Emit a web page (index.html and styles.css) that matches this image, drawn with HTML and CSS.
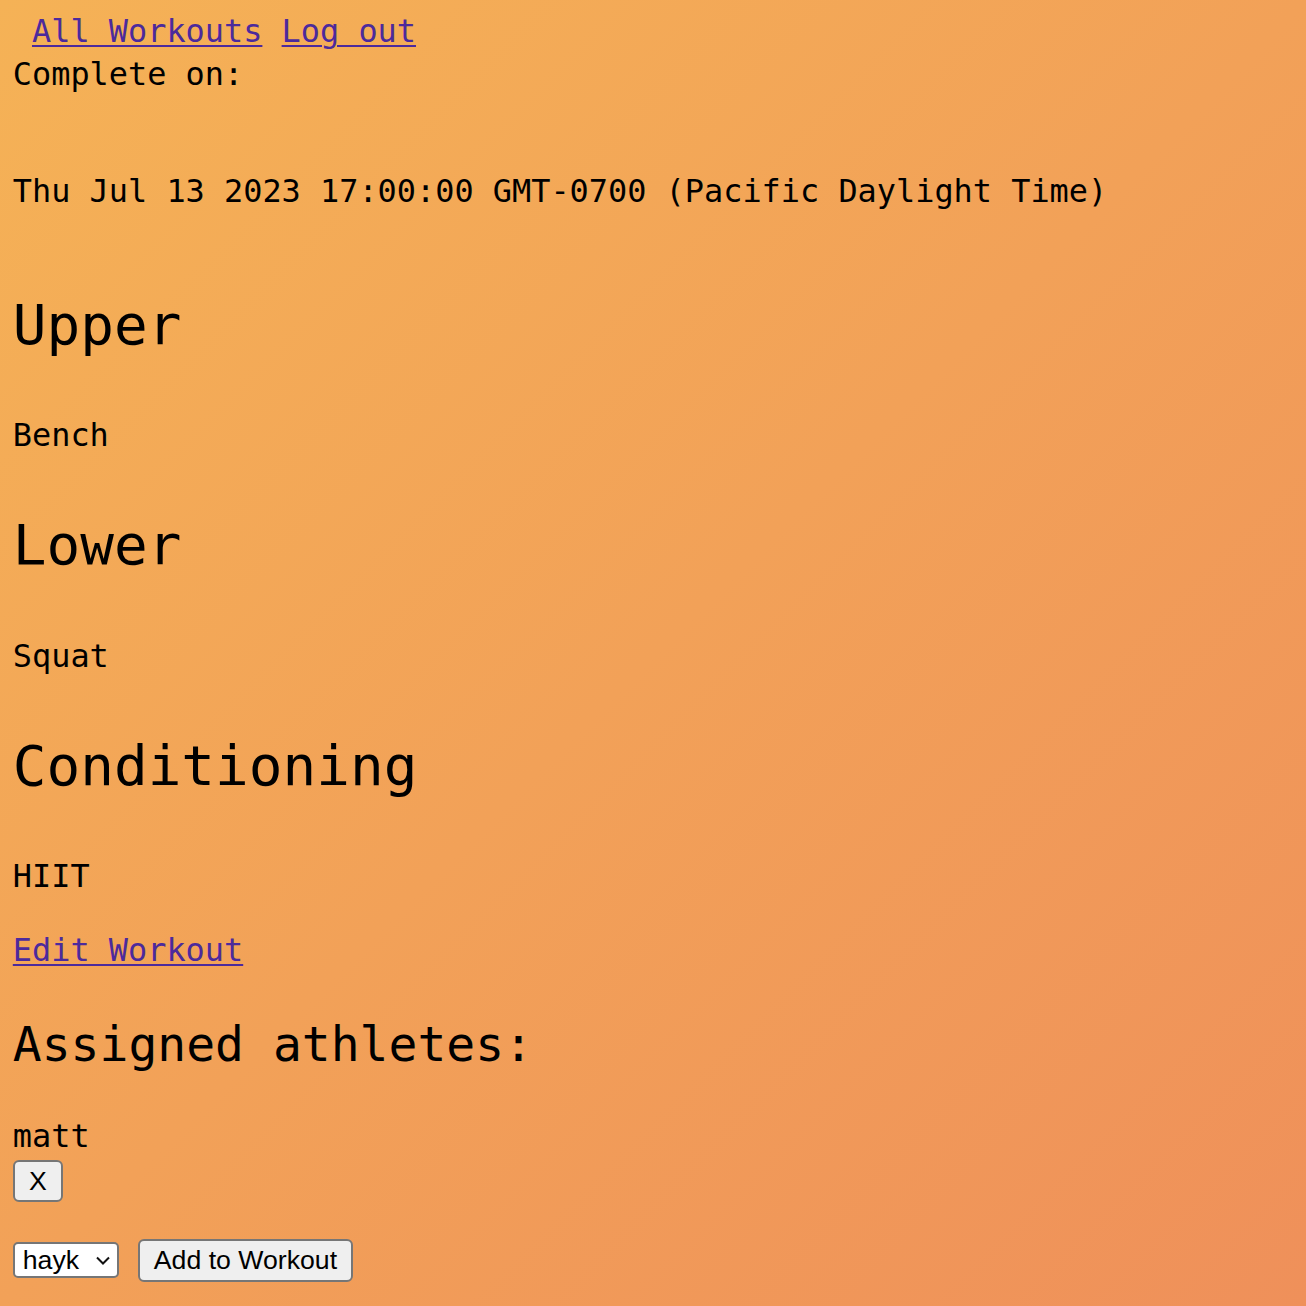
FILE: index.html
```html
<!DOCTYPE html>
<html lang="en">
<head>
<meta charset="utf-8">
<title>Workout</title>
<link rel="stylesheet" href="styles.css">
</head>
<body class="body">
<div class="page">
  <nav class="nav"><a class="link" href="#">All Workouts</a> <a class="link" href="#">Log out</a></nav>
  <div class="line">Complete on:</div>
  <p class="line date">Thu Jul 13 2023 17:00:00 GMT-0700 (Pacific Daylight Time)</p>
  <section class="cat cat-first">
    <h2 class="cat-title">Upper</h2>
    <p class="line cat-item">Bench</p>
  </section>
  <section class="cat">
    <h2 class="cat-title">Lower</h2>
    <p class="line cat-item">Squat</p>
  </section>
  <section class="cat">
    <h2 class="cat-title">Conditioning</h2>
    <p class="line cat-item">HIIT</p>
  </section>
  <a class="link line edit" href="#">Edit Workout</a>
  <h2 class="assigned-title">Assigned athletes:</h2>
  <div class="athlete">
    <div class="line">matt</div>
    <button class="btn btn-x" type="button">X</button>
  </div>
  <form class="add-row">
    <span class="select-wrap">
      <select class="select"><option>hayk</option><option>matt</option></select>
      <svg class="chev" width="14" height="9" viewBox="0 0 14 9" aria-hidden="true"><path d="M1 1.5 L7 7.5 L13 1.5" fill="none" stroke="#111" stroke-width="2"/></svg>
    </span>
    <button class="btn btn-add" type="button">Add to Workout</button>
  </form>
</div>
</body>
</html>
```

FILE: styles.css
```css
.body {
  margin: 0;
}

.page {
  min-height: 100vh;
  box-sizing: border-box;
  padding: 10px 16px 0 12.8px;
  background: linear-gradient(to bottom right, #f5b256, #ef905a);
  font-family: "DejaVu Sans Mono", "Liberation Mono", monospace;
  font-size: 31.9px;
  line-height: 43px;
  color: #000;
  display: flex;
  flex-direction: column;
  align-items: flex-start;
}

.nav {
  padding-left: 19.2px;
  line-height: 43px;
  white-space: pre;
}

.link {
  color: #4c2a9c;
  text-decoration: underline;
  text-decoration-thickness: 2px;
  text-underline-offset: 3px;
}

.line {
  margin: 0;
  line-height: 43px;
}

.date {
  margin-top: 74.4px;
}

.cat {
  display: flex;
  flex-direction: column;
  align-items: flex-start;
  margin-top: 51px;
}

.cat-first {
  margin-top: 74.2px;
}

.cat-title {
  margin: 0;
  font-size: 56px;
  line-height: 74px;
  font-weight: normal;
}

.cat-item {
  margin-top: 52.5px;
}

.edit {
  display: block;
  margin-top: 31.3px;
}

.assigned-title {
  margin: 40.5px 0 0;
  font-size: 48px;
  line-height: 63px;
  font-weight: normal;
}

.athlete {
  margin-top: 39.5px;
  display: flex;
  flex-direction: column;
  align-items: flex-start;
}

.btn {
  box-sizing: border-box;
  font-family: "Liberation Sans", Arial, sans-serif;
  font-size: 26.67px;
  line-height: 30px;
  color: #000;
  background: #efefef;
  border: 2px solid #767676;
  border-radius: 6px;
  padding: 0 14px;
  margin: 0;
}

.btn-x {
  margin-top: 1.6px;
  width: 50px;
  height: 42px;
  padding: 0;
}

.add-row {
  margin: 37px 0 0;
  display: flex;
  align-items: center;
  gap: 19px;
}

.btn-add {
  height: 43px;
}

.select-wrap {
  position: relative;
  display: inline-flex;
}

.select {
  appearance: none;
  -webkit-appearance: none;
  box-sizing: border-box;
  width: 106px;
  height: 36px;
  padding: 0 0 0 8px;
  margin: 0;
  background: #fff;
  border: 2px solid #767676;
  border-radius: 5px;
  font-family: "Liberation Sans", Arial, sans-serif;
  font-size: 26.67px;
  color: #000;
}

.chev {
  position: absolute;
  right: 9px;
  top: 14px;
  pointer-events: none;
}
```
